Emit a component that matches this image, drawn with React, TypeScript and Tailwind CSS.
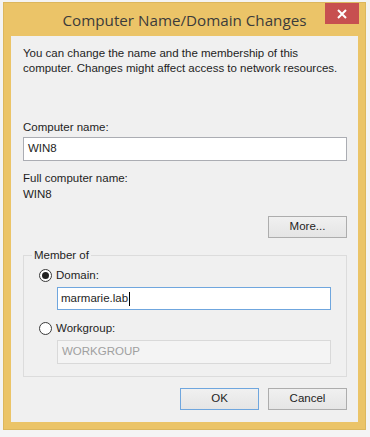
const font = { fontFamily: '"Liberation Sans", Arial, sans-serif' };

const Radio = ({ checked }: { checked?: boolean }) => (
  <span className="flex h-[13px] w-[13px] items-center justify-center rounded-full border border-[#3a3a3a] bg-white">
    {checked && <span className="h-[7px] w-[7px] rounded-full bg-[#222]" />}
  </span>
);

const Button = ({ label, primary }: { label: string; primary?: boolean }) => (
  <button
    className={`flex h-[22px] w-[79px] items-center justify-center border bg-gradient-to-b from-[#f0f0f0] to-[#e5e5e5] text-[11.5px] text-[#1e1e1e] ${
      primary ? "border-[#6fa6de]" : "border-[#adadad]"
    }`}
  >
    {label}
  </button>
);

export default function App() {
  return (
    <div
      className="relative h-[437px] w-[370px] overflow-hidden bg-[#f4f4f4] pl-[3px] pt-[2px]"
      style={font}
    >
      <div className="flex h-[428px] w-[363px] flex-col border border-[#dcb75e] bg-[#ebc468]">
        {/* title bar */}
        <div className="relative flex h-[33px] shrink-0 items-center justify-center">
          <span
            className="mt-[1px] text-[15.2px] text-[#3b3b3b]"
            style={{ fontFamily: '"Open Sans", "Noto Sans", sans-serif' }}
          >
            Computer Name/Domain Changes
          </span>
          <div className="absolute right-[6px] top-0 flex h-[21px] w-[34px] items-center justify-center bg-[#c75050]">
            <svg width="10" height="10" viewBox="0 0 10 10">
              <path d="M1 1 L9 9 M9 1 L1 9" stroke="white" strokeWidth="2" />
            </svg>
          </div>
        </div>

        {/* client area */}
        <div className="mx-[7px] h-[386px] bg-[#f0f0f0] px-[12px] text-[11.5px] text-[#1e1e1e]">
          <p className="whitespace-nowrap pt-[10px] leading-[15px]">
            You can change the name and the membership of this
            <br />
            computer. Changes might affect access to network resources.
          </p>

          <div className="mt-[44px] leading-[15px]">Computer name:</div>
          <div className="mt-[2px] flex h-[24px] w-[324px] items-center border border-[#abadb3] bg-white px-[4px]">
            WIN8
          </div>

          <div className="mt-[10px] leading-[15px]">Full computer name:</div>
          <div className="mt-[1px] leading-[15px]">WIN8</div>

          <div className="mt-[14px] flex w-[324px] justify-end">
            <Button label="More..." />
          </div>

          {/* group box */}
          <div className="relative mt-[17px] h-[122px] w-[324px] border border-[#dcdcdc]">
            <span className="absolute -top-[8px] left-[8px] bg-[#f0f0f0] px-[2px] leading-[15px]">
              Member of
            </span>
            <div className="pl-[15px] pt-[12px]">
              <div className="flex items-center gap-[4px] leading-[15px]">
                <Radio checked />
                <span>Domain:</span>
              </div>
              <div className="ml-[18px] mt-[4px] flex h-[23px] w-[274px] items-center border border-[#6fa6de] bg-white px-[3px]">
                marmarie.lab
                <span className="ml-[1px] h-[14px] w-[1px] bg-black" />
              </div>
              <div className="mt-[11px] flex items-center gap-[4px] leading-[15px]">
                <Radio />
                <span>Workgroup:</span>
              </div>
              <div className="ml-[18px] mt-[4px] flex h-[24px] w-[274px] items-center border border-[#d9d9d9] bg-[#f4f4f4] px-[4px] text-[#a0a0a0]">
                WORKGROUP
              </div>
            </div>
          </div>

          <div className="mt-[11px] flex w-[324px] justify-end gap-[9px]">
            <Button label="OK" primary />
            <Button label="Cancel" />
          </div>
        </div>
      </div>
    </div>
  );
}
